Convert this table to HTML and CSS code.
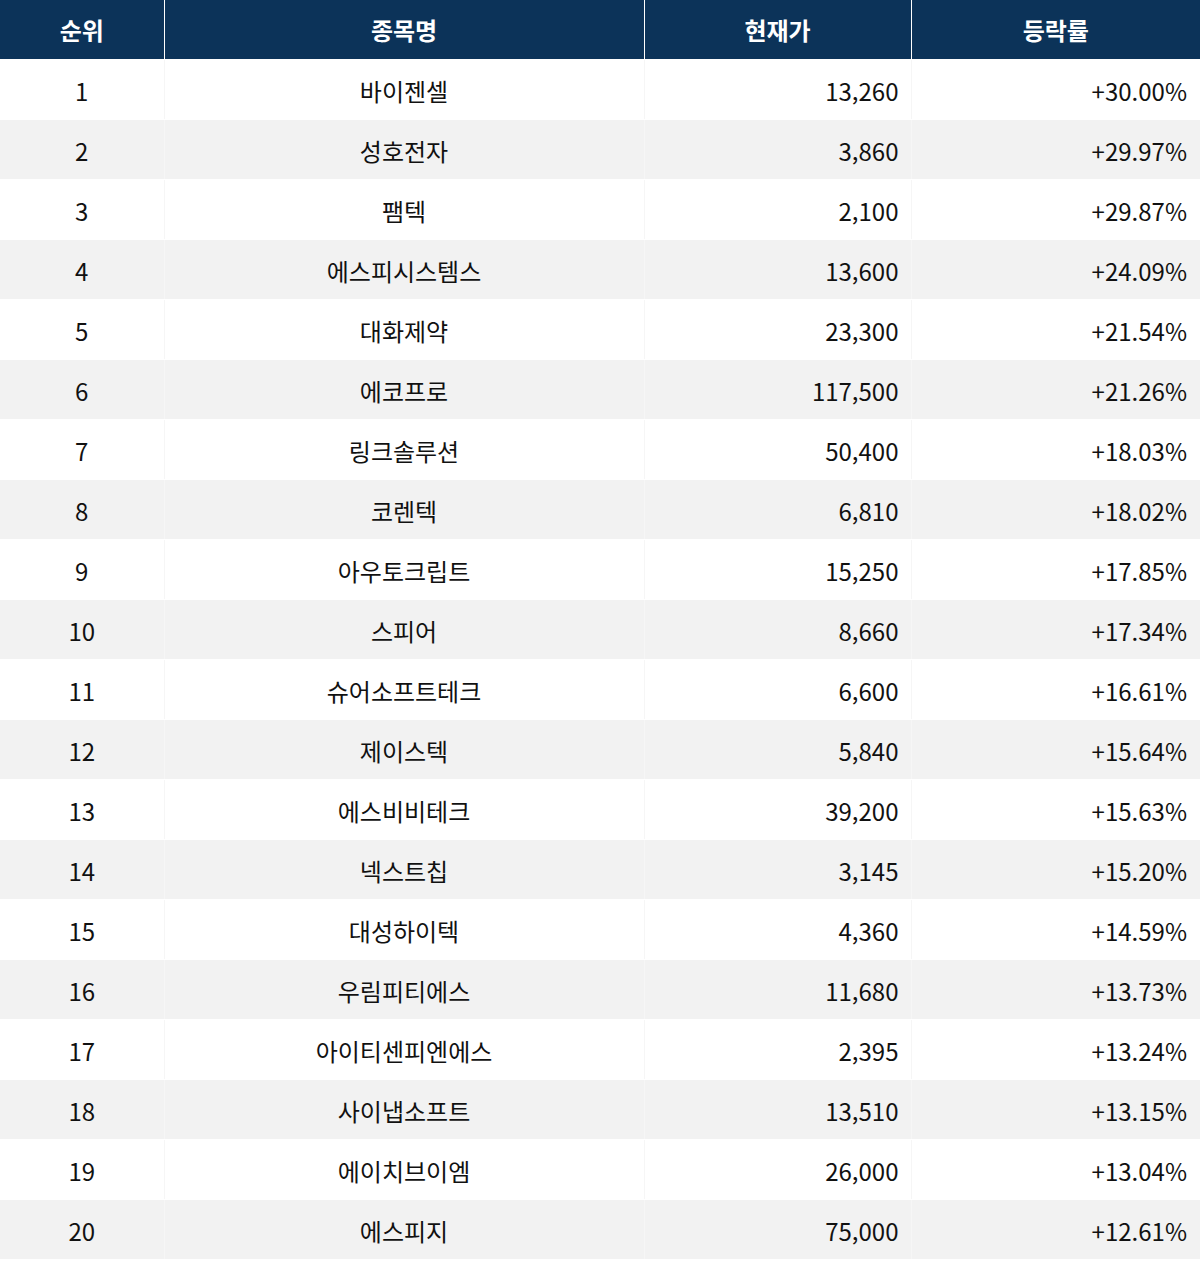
FILE: index.html
```html
<!DOCTYPE html>
<html lang="ko">
<head>
<meta charset="utf-8">
<link rel="stylesheet" href="styles.css">
</head>
<body>
<table class="rank-table">
  <colgroup>
    <col class="c-rank"><col class="c-name"><col class="c-price"><col class="c-rate">
  </colgroup>
  <thead>
    <tr><th>순위</th><th>종목명</th><th>현재가</th><th>등락률</th></tr>
  </thead>
  <tbody>
    <tr><td class="center">1</td><td class="center">바이젠셀</td><td class="right">13,260</td><td class="right rate">+30.00%</td></tr>
    <tr><td class="center">2</td><td class="center">성호전자</td><td class="right">3,860</td><td class="right rate">+29.97%</td></tr>
    <tr><td class="center">3</td><td class="center">팸텍</td><td class="right">2,100</td><td class="right rate">+29.87%</td></tr>
    <tr><td class="center">4</td><td class="center">에스피시스템스</td><td class="right">13,600</td><td class="right rate">+24.09%</td></tr>
    <tr><td class="center">5</td><td class="center">대화제약</td><td class="right">23,300</td><td class="right rate">+21.54%</td></tr>
    <tr><td class="center">6</td><td class="center">에코프로</td><td class="right">117,500</td><td class="right rate">+21.26%</td></tr>
    <tr><td class="center">7</td><td class="center">링크솔루션</td><td class="right">50,400</td><td class="right rate">+18.03%</td></tr>
    <tr><td class="center">8</td><td class="center">코렌텍</td><td class="right">6,810</td><td class="right rate">+18.02%</td></tr>
    <tr><td class="center">9</td><td class="center">아우토크립트</td><td class="right">15,250</td><td class="right rate">+17.85%</td></tr>
    <tr><td class="center">10</td><td class="center">스피어</td><td class="right">8,660</td><td class="right rate">+17.34%</td></tr>
    <tr><td class="center">11</td><td class="center">슈어소프트테크</td><td class="right">6,600</td><td class="right rate">+16.61%</td></tr>
    <tr><td class="center">12</td><td class="center">제이스텍</td><td class="right">5,840</td><td class="right rate">+15.64%</td></tr>
    <tr><td class="center">13</td><td class="center">에스비비테크</td><td class="right">39,200</td><td class="right rate">+15.63%</td></tr>
    <tr><td class="center">14</td><td class="center">넥스트칩</td><td class="right">3,145</td><td class="right rate">+15.20%</td></tr>
    <tr><td class="center">15</td><td class="center">대성하이텍</td><td class="right">4,360</td><td class="right rate">+14.59%</td></tr>
    <tr><td class="center">16</td><td class="center">우림피티에스</td><td class="right">11,680</td><td class="right rate">+13.73%</td></tr>
    <tr><td class="center">17</td><td class="center">아이티센피엔에스</td><td class="right">2,395</td><td class="right rate">+13.24%</td></tr>
    <tr><td class="center">18</td><td class="center">사이냅소프트</td><td class="right">13,510</td><td class="right rate">+13.15%</td></tr>
    <tr><td class="center">19</td><td class="center">에이치브이엠</td><td class="right">26,000</td><td class="right rate">+13.04%</td></tr>
    <tr><td class="center">20</td><td class="center">에스피지</td><td class="right">75,000</td><td class="right rate">+12.61%</td></tr>
  </tbody>
</table>
</body>
</html>
```

FILE: styles.css
```css
html, body {
  margin: 0;
  padding: 0;
  background: #ffffff;
}

.rank-table {
  width: 1200px;
  border-collapse: collapse;
  table-layout: fixed;
  font-family: "Noto Sans CJK KR", "Noto Sans", sans-serif;
  font-size: 24px;
  color: #111111;
}

.c-rank { width: 164px; }
.c-name { width: 480px; }
.c-price { width: 267px; }
.c-rate { width: 289px; }

.rank-table th {
  height: 59px;
  background: #0c3359;
  color: #ffffff;
  font-weight: 700;
  text-align: center;
  padding: 0;
  border-left: 1px solid #ffffff;
  border-bottom: 1px solid #ffffff;
}

.rank-table th:first-child { border-left: none; }

.rank-table td {
  height: 58px;
  padding: 1px 12px 0 12px;
  border-left: 1px solid #f6f6f6;
  border-bottom: 1px solid #ffffff;
  font-weight: 400;
}

.rank-table td:first-child { border-left: none; }

.rank-table td.rate { padding-right: 13px; }

.rank-table tbody tr:nth-child(even) td {
  background: #f2f2f2;
}

.center { text-align: center; }
.right { text-align: right; }
```
